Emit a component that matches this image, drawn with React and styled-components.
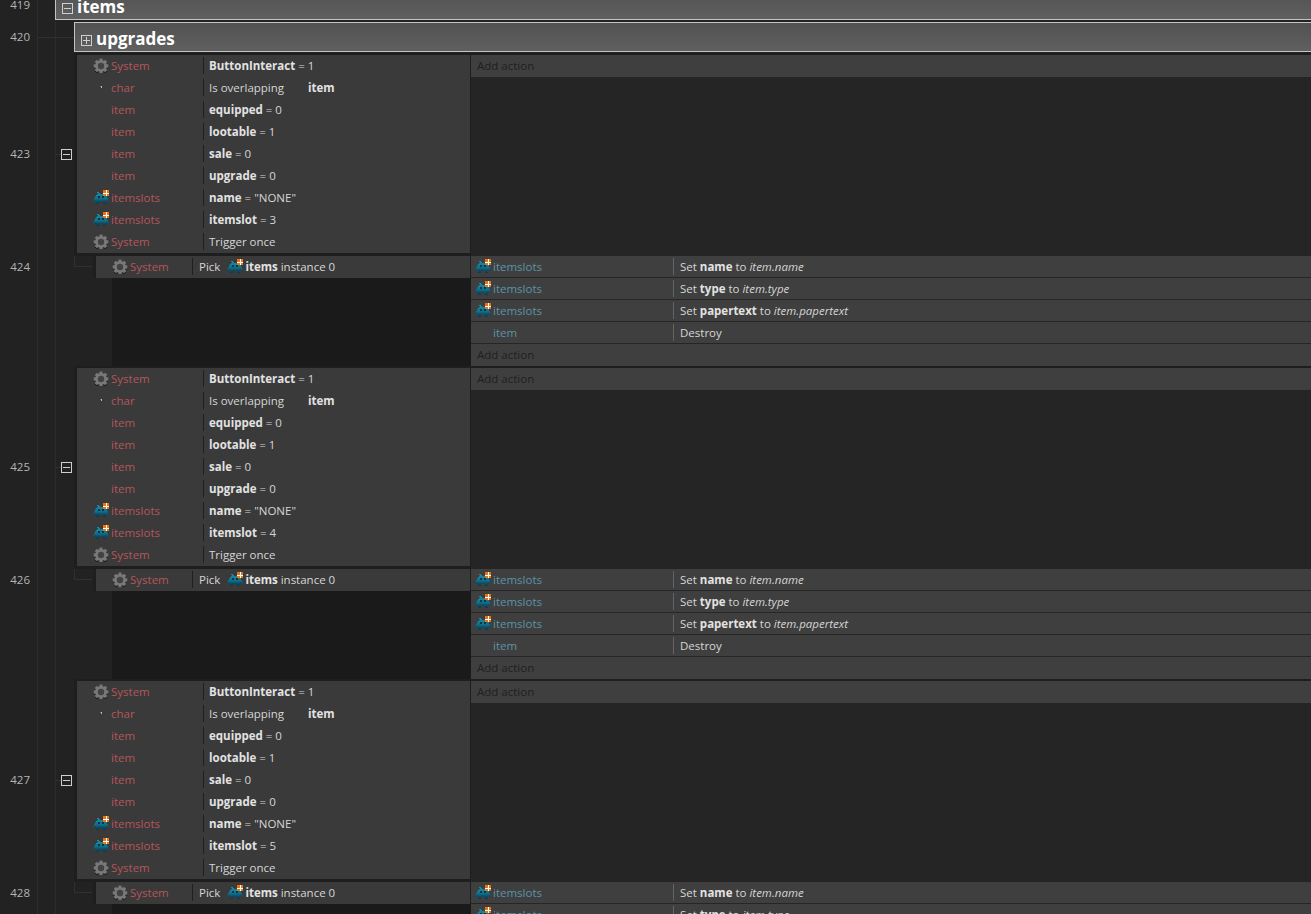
import React from 'react';
import styled, { createGlobalStyle } from 'styled-components';

const GlobalStyle = createGlobalStyle`
  html, body {
    margin: 0;
    background: #222222;
  }
  body {
    font-family: "Open Sans", "Liberation Sans", sans-serif;
    font-size: 11.5px;
    color: #d6d6d6;
  }
`;

const Sheet = styled.div`
  width: 1311px;
  height: 914px;
  overflow: hidden;
  background: #222222;
`;

const Scroll = styled.div`
  margin-top: -10px;
`;

const Row = styled.div`
  display: flex;
  align-items: stretch;
`;

const Gutter = styled.div`
  flex: none;
  display: flex;
  width: ${(p) => p.$width}px;
  ${(p) =>
    p.$tick &&
    `background: linear-gradient(#303030, #303030) right center / 36px 1px no-repeat;`}
`;

const LineNo = styled.div`
  flex: none;
  box-sizing: border-box;
  width: 38px;
  padding-right: 7px;
  border-right: 1px solid #2c2c2c;
  display: flex;
  justify-content: flex-end;
  align-items: ${(p) => (p.$top ? 'flex-start' : 'center')};
  padding-top: ${(p) => (p.$top ? '3px' : '0')};
  padding-bottom: ${(p) => (p.$top ? '0' : '3px')};
  color: #b4b4b4;
  font-size: 11.5px;
`;

const TreeCol = styled.div`
  flex: none;
  box-sizing: border-box;
  width: 18px;
  border-right: 1px solid #2c2c2c;
`;

const ToggleCol = styled.div`
  flex: none;
  width: 18px;
  box-sizing: border-box;
  padding: 0 0 0 5px;
  display: flex;
  align-items: center;
  background: linear-gradient(#303030, #303030) left center / 5px 1px no-repeat;
`;

const Toggle = styled.div`
  flex: none;
  box-sizing: border-box;
  width: 11px;
  height: 11px;
  border: 1px solid #cfcfcf;
  display: flex;
  align-items: center;
  justify-content: center;
  position: relative;

  &::before {
    content: '';
    width: 7px;
    height: 1px;
    background: #cfcfcf;
  }

  ${(p) =>
    p.$closed &&
    `&::after {
      content: '';
      position: absolute;
      left: 4px;
      top: 1px;
      width: 1px;
      height: 7px;
      background: #cfcfcf;
    }`}
`;

const Group = styled.div`
  flex: 1;
  box-sizing: border-box;
  height: 30px;
  margin-bottom: ${(p) => p.$gap}px;
  padding: 7px 0 0 6px;
  display: flex;
  align-items: center;
  gap: 4px;
  background: linear-gradient(#525252, #606060);
  border: 1px solid #c4c4c4;
  border-right: 0;
`;

const GroupTitle = styled.span`
  color: #ffffff;
  font-size: 17px;
  font-weight: 700;
  line-height: 16px;
  margin-top: -3px;
`;

const Conditions = styled.div`
  flex: none;
  box-sizing: border-box;
  width: 397px;
  border-left: 3px solid #1e1e1e;
  border-right: 1px solid #1e1e1e;
  border-top: 2px solid #1e1e1e;
  border-bottom: 3px solid #1e1e1e;
  background: #3a3a3a;
`;

const CondRow = styled.div`
  display: flex;
  align-items: center;
  box-sizing: border-box;
  height: 22px;
  padding-bottom: 2px;
`;

const ObjectCell = styled.div`
  flex: none;
  box-sizing: border-box;
  display: flex;
  align-items: center;
  width: ${(p) => p.$width}px;
  padding-left: ${(p) => p.$pad}px;
  color: ${(p) => (p.$action ? '#5a94a6' : '#b5555a')};
`;

const IconSlot = styled.span`
  flex: none;
  display: inline-flex;
  width: 16px;
  height: 16px;
  margin-right: 2px;
  margin-top: ${(p) => (p.$shift ? '2px' : '0')};
`;

const Divider = styled.div`
  flex: none;
  width: 1px;
  height: 17px;
  background: ${(p) => (p.$action ? '#646464' : '#1f1f1f')};
`;

const CondText = styled.div`
  padding-left: ${(p) => p.$pad}px;
  display: flex;
  align-items: center;
  white-space: pre;
`;

const Param = styled.b`
  font-weight: 700;
  color: #e2e2e2;
  margin-left: ${(p) => p.$left || 0}px;
`;

const Actions = styled.div`
  flex: 1;
  box-sizing: border-box;
  background: #252525;
`;

const ActionRow = styled.div`
  display: flex;
  align-items: center;
  box-sizing: border-box;
  height: 22px;
  border-bottom: 1px solid #262626;
  background: #3f3f3f;
`;

const AddAction = styled(ActionRow)`
  padding: 0 0 2px 6px;
  color: #202020;
  border-bottom: 0;
`;

const TopPad = styled.div`
  height: 2px;
  background: #1e1e1e;
`;

const SubIndent = styled.div`
  flex: none;
  width: 19px;
`;

const Connector = styled.div`
  box-sizing: border-box;
  height: 11px;
  margin-right: 1px;
  border-left: 1px solid #303030;
  border-bottom: 1px solid #303030;
`;

const SubConditions = styled.div`
  flex: none;
  width: 378px;
  display: flex;
  flex-direction: column;
`;

const SubHead = styled(CondRow)`
  background: #3a3a3a;
  border-left: 3px solid #1e1e1e;
  border-right: 1px solid #1e1e1e;
`;

const SubBody = styled.div`
  flex: 1;
  margin-left: 19px;
  background: #1a1a1a;
`;

const InlineIcon = styled.span`
  display: inline-flex;
  width: 16px;
  height: 16px;
  margin: 2px 2px 0 7px;
`;

// o = the dark eye pixels of the sprite
const INVADER = [
  '....##..........',
  '.....##.........',
  '....########....',
  '...##########...',
  '..###oo##oo###..',
  '..###oo##oo###..',
  '.##############.',
  '.##############.',
  '##.##########.##',
  '##.##.####.##.##',
  '....##....##....',
  '...###....###...',
];
const SHADES = [
  '#1a8ba6', '#1a8ba6', '#14809b', '#13869f', '#107590', '#107590',
  '#0e6f8a', '#0d6680', '#0b5872', '#0a4c66', '#0a4560', '#093c56',
];

const SpriteIcon = () => (
  <svg width="16" height="16" viewBox="0 0 16 16" shapeRendering="crispEdges">
    {INVADER.map((line, y) =>
      line.split('').map((c, x) =>
        c === '.' ? null : (
          <rect key={`${x}-${y}`} x={x} y={y + 2} width="1" height="1" fill={c === 'o' ? '#0a3348' : SHADES[y]} />
        )
      )
    )}
    <rect x="10" y="0" width="6" height="6" fill="#e8730f" />
    <rect x="12.5" y="0" width="1" height="6" fill="#fff" />
    <rect x="10" y="2.5" width="6" height="1" fill="#fff" />
  </svg>
);

const GearIcon = () => {
  const teeth = [0, 45, 90, 135];
  const gear = (fill, dy) => (
    <g transform={`translate(0 ${dy})`} fill={fill}>
      <circle cx="8" cy="8" r="6" />
      {teeth.map((a) => (
        <rect key={a} x="6.4" y="0.6" width="3.2" height="14.8" transform={`rotate(${a} 8 8)`} />
      ))}
    </g>
  );
  return (
    <svg width="16" height="16" viewBox="0 0 16 16">
      {gear('#141414', 0.8)}
      {gear('#797979', 0)}
      <circle cx="8" cy="8" r="3.2" fill="#434343" />
    </svg>
  );
};

const DotIcon = () => (
  <svg width="16" height="16" viewBox="0 0 16 16" shapeRendering="crispEdges">
    <rect x="8" y="6" width="1" height="2" fill="#b8b8b8" />
    <rect x="7" y="6" width="1" height="1" fill="#6e6e6e" />
  </svg>
);

const ICONS = { system: <GearIcon />, sprite: <SpriteIcon />, dot: <DotIcon />, none: null };

const Obj = ({ icon, shift, children }) => (
  <>
    <IconSlot $shift={shift}>{ICONS[icon]}</IconSlot>
    {children}
  </>
);

const conditionsFor = (slot, equipped) => [
  ['system', 'System', <><Param>ButtonInteract</Param> = 1</>],
  ['dot', 'char', <>Is overlapping<Param $left={24}>item</Param></>],
  ['none', 'item', <><Param>equipped</Param> = {equipped}</>],
  ['none', 'item', <><Param>lootable</Param> = 1</>],
  ['none', 'item', <><Param>sale</Param> = 0</>],
  ['none', 'item', <><Param>upgrade</Param> = 0</>],
  ['sprite', 'itemslots', <><Param>name</Param> = "NONE"</>],
  ['sprite', 'itemslots', <><Param>itemslot</Param> = {slot}</>],
  ['system', 'System', <>Trigger once</>],
];

const setters = [
  ['sprite', 'itemslots', <>Set <Param>name</Param> to <i>item.name</i></>],
  ['sprite', 'itemslots', <>Set <Param>type</Param> to <i>item.type</i></>],
  ['sprite', 'itemslots', <>Set <Param>papertext</Param> to <i>item.papertext</i></>],
  ['none', 'item', <>Destroy</>],
];

const events = [
  { line: 423, sub: 424, slot: 3, equipped: 0 },
  { line: 425, sub: 426, slot: 4, equipped: 0 },
  { line: 427, sub: 428, slot: 5, equipped: 0 },
];

const Event = ({ line, sub, slot, equipped }) => (
  <>
    <Row>
      <Gutter $width={74}>
        <LineNo>{line}</LineNo>
        <TreeCol />
        <ToggleCol><Toggle /></ToggleCol>
      </Gutter>
      <Conditions>
        {conditionsFor(slot, equipped).map(([icon, name, text], i) => (
          <CondRow key={i}>
            <ObjectCell $width={126} $pad={16}><Obj icon={icon} shift>{name}</Obj></ObjectCell>
            <Divider />
            <CondText $pad={5}>{text}</CondText>
          </CondRow>
        ))}
      </Conditions>
      <Actions>
        <TopPad />
        <AddAction>Add action</AddAction>
      </Actions>
    </Row>
    <Row>
      <Gutter $width={74}>
        <LineNo $top>{sub}</LineNo>
        <TreeCol />
      </Gutter>
      <SubIndent><Connector /></SubIndent>
      <SubConditions>
        <SubHead>
          <ObjectCell $width={96} $pad={16}><Obj icon="system" shift>System</Obj></ObjectCell>
          <Divider />
          <CondText $pad={6}>
            Pick<InlineIcon><SpriteIcon /></InlineIcon><Param>items</Param> instance 0
          </CondText>
        </SubHead>
        <SubBody />
      </SubConditions>
      <Actions>
        {setters.map(([icon, name, text], i) => (
          <ActionRow key={i}>
            <ObjectCell $width={202} $action $pad={4}><Obj icon={icon}>{name}</Obj></ObjectCell>
            <Divider $action />
            <CondText $pad={6}>{text}</CondText>
          </ActionRow>
        ))}
        <AddAction>Add action</AddAction>
      </Actions>
    </Row>
  </>
);

export default function App() {
  return (
    <Sheet>
      <GlobalStyle />
      <Scroll>
        <Row>
          <Gutter $width={55}><LineNo>419</LineNo></Gutter>
          <Group $gap={2}><Toggle /><GroupTitle>items</GroupTitle></Group>
        </Row>
        <Row>
          <Gutter $width={74} $tick>
            <LineNo>420</LineNo>
            <TreeCol />
          </Gutter>
          <Group $gap={1}><Toggle $closed /><GroupTitle>upgrades</GroupTitle></Group>
        </Row>
        {events.map((e) => <Event key={e.line} {...e} />)}
      </Scroll>
    </Sheet>
  );
}
